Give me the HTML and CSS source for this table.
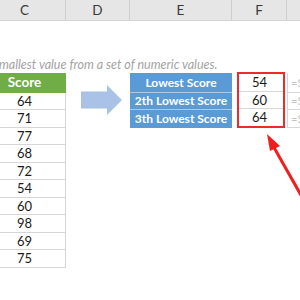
FILE: index.html
```html
<!DOCTYPE html>
<html>
<head>
<meta charset="utf-8">
<link rel="stylesheet" href="styles.css">
</head>
<body>
<div class="sheet">
  <div class="hdr">C</div>
  <div class="hdr">D</div>
  <div class="hdr">E</div>
  <div class="hdr">F</div>
  <div class="hdr"></div>

  <div class="desc">smallest value from a set of numeric values.</div>

  <div class="col-c">
    <div class="cell head">Score</div>
    <div class="cell">64</div>
    <div class="cell">71</div>
    <div class="cell">77</div>
    <div class="cell">68</div>
    <div class="cell">72</div>
    <div class="cell">54</div>
    <div class="cell">60</div>
    <div class="cell">98</div>
    <div class="cell">69</div>
    <div class="cell">75</div>
  </div>

  <div class="col-d">
    <svg class="block-arrow" width="64" height="54" viewBox="0 0 64 54">
      <path d="M15 18.5 H41 V12 L56 27 L41 42 V35.5 H15 Z" fill="#aac2e6"/>
    </svg>
  </div>

  <div class="col-e">
    <div class="lbl first">Lowest Score</div>
    <div class="lbl">2th Lowest Score</div>
    <div class="lbl last">3th Lowest Score</div>
  </div>

  <div class="col-f">
    <div class="redbox">
      <div class="val">54</div>
      <div class="val">60</div>
      <div class="val last">64</div>
    </div>
  </div>

  <div class="col-g">
    <div class="fx first">=SMALL(C4:C13,1)</div>
    <div class="fx">=SMALL(C4:C13,2)</div>
    <div class="fx">=SMALL(C4:C13,3)</div>
  </div>
</div>

<svg class="red-arrow" width="300" height="300" viewBox="0 0 300 300">
  <line x1="272" y1="144" x2="306" y2="204" stroke="#f01e1e" stroke-width="3"/>
  <path d="M267 134 L280 146 L270 151 Z" fill="#f01e1e"/>
</svg>
</body>
</html>
```

FILE: styles.css
```css
html, body {
  margin: 0;
  padding: 0;
  background: #ffffff;
}

body {
  position: relative;
  width: 300px;
  height: 300px;
  overflow: hidden;
  font-family: Lato, "Open Sans", "Liberation Sans", sans-serif;
  color: #1a1a1a;
}

.sheet {
  display: grid;
  grid-template-columns: 82px 64px 102px 55px 60px;
  grid-template-rows: 21px 34px 18px 19.5px repeat(10, 17.5px);
  margin-left: -16px;
  width: 363px;
}

.hdr {
  grid-row: 1;
  background: #e6e6e6;
  border-right: 1px solid #cdcdcd;
  border-bottom: 1px solid #d4d4d4;
  box-sizing: border-box;
  display: flex;
  align-items: center;
  justify-content: center;
  font-size: 13.5px;
  color: #3a3a3a;
}

.desc {
  grid-column: 1 / -1;
  grid-row: 3;
  display: flex;
  align-items: center;
  padding-left: 10px;
  font-style: italic;
  font-size: 12.5px;
  color: #a3a3a3;
  white-space: nowrap;
}

.col-c {
  grid-column: 1;
  grid-row: 4 / 15;
  display: flex;
  flex-direction: column;
}

.cell {
  height: 17.5px;
  flex: none;
  box-sizing: border-box;
  border-bottom: 1px solid #d6d6d6;
  border-right: 1px solid #d6d6d6;
  display: flex;
  align-items: center;
  justify-content: center;
  font-size: 13px;
  color: #1a1a1a;
}

.cell.head {
  height: 19.5px;
  background: #70ad47;
  border-color: #70ad47;
  color: #ffffff;
  font-weight: bold;
  font-size: 13.5px;
}

.col-d {
  grid-column: 2;
  grid-row: 4 / 7;
}

.block-arrow {
  display: block;
}

.col-e {
  grid-column: 3;
  grid-row: 4 / 7;
  display: flex;
  flex-direction: column;
}

.lbl {
  height: 17.5px;
  box-sizing: border-box;
  background: #5b9bd5;
  border-bottom: 1px solid #a9c8ea;
  display: flex;
  align-items: center;
  justify-content: center;
  color: #ffffff;
  font-weight: bold;
  font-size: 12px;
}

.lbl.first {
  height: 19.5px;
}

.lbl.last {
  border-bottom: none;
}

.col-f {
  grid-column: 4;
  grid-row: 4 / 7;
  padding: 0 2px 0 5px;
  display: flex;
  flex-direction: column;
}

.redbox {
  flex: 1;
  margin-top: -1px;
  border: 2px solid #ee2a2a;
  display: flex;
  flex-direction: column;
}

.val {
  flex: 1;
  box-sizing: border-box;
  border-bottom: 1px solid #d6d6d6;
  display: flex;
  align-items: center;
  justify-content: center;
  padding-right: 3px;
  font-size: 13px;
  color: #1a1a1a;
}

.val.last {
  border-bottom: none;
}

.col-g {
  grid-column: 5;
  grid-row: 4 / 7;
  display: flex;
  flex-direction: column;
  border-left: 1px solid #d6d6d6;
  overflow: hidden;
}

.fx {
  height: 17.5px;
  box-sizing: border-box;
  border-bottom: 1px solid #d6d6d6;
  display: flex;
  align-items: center;
  padding-left: 3px;
  font-size: 11px;
  color: #c4c4c4;
  white-space: nowrap;
}

.fx.first {
  height: 19.5px;
}

.red-arrow {
  position: absolute;
  left: 0;
  top: 0;
  pointer-events: none;
}
```
